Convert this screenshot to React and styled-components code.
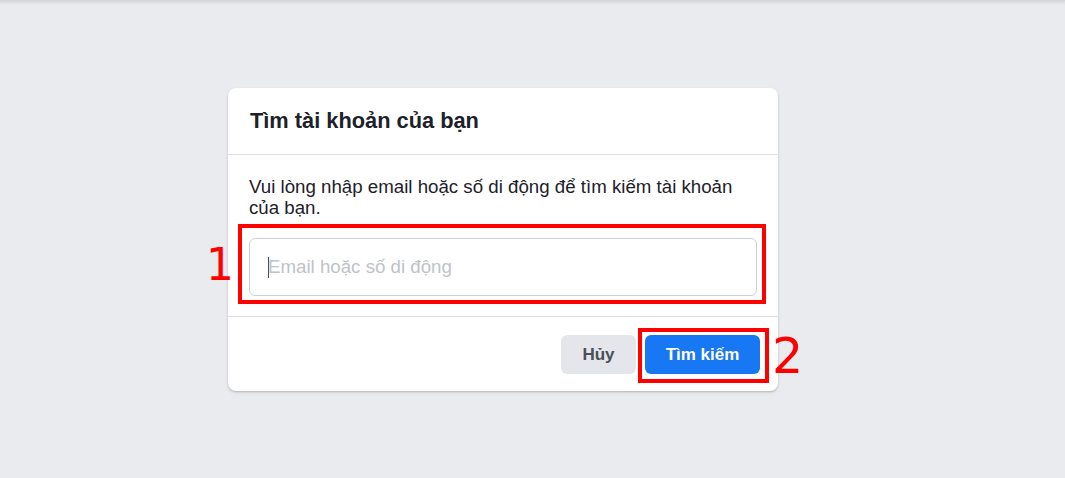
import React from 'react'
import styled, { createGlobalStyle } from 'styled-components'

const Global = createGlobalStyle`
  html, body {
    margin: 0;
    padding: 0;
    background: #e9ebee;
    font-family: "Liberation Sans", Arial, Helvetica, sans-serif;
  }
`

const Page = styled.div`
  width: 1065px;
  height: 478px;
  box-sizing: border-box;
  background: linear-gradient(to bottom, #d2d4d8 0px, #e4e6ea 4px, #e9ebee 6px);
  padding: 88px 0 0 228px;
`

const Card = styled.div`
  width: 550px;
  background: #fff;
  border-radius: 8px;
  box-shadow: 0 1px 2px rgba(0, 0, 0, 0.18), 0 2px 4px rgba(0, 0, 0, 0.06);
`

const Header = styled.div`
  height: 66px;
  padding: 0 22px;
  display: flex;
  align-items: center;
  border-bottom: 1px solid #dddfe2;
`

const Title = styled.h2`
  margin: 0;
  font-size: 21.8px;
  font-weight: bold;
  color: #1d2129;
`

const Body = styled.div`
  padding: 21px 21px 20px;
  border-bottom: 1px solid #dddfe2;
`

const Text = styled.p`
  margin: 0 0 20px;
  font-size: 18.7px;
  line-height: 21px;
  color: #1d2129;
`

const Mark = styled.div`
  position: relative;
`

const Highlight = styled.div`
  position: absolute;
  top: ${p => p.$top}px;
  left: ${p => p.$left}px;
  right: ${p => p.$right}px;
  bottom: ${p => p.$bottom}px;
  border: 4px solid #ff0000;
  pointer-events: none;
`

const Label = styled.span`
  position: absolute;
  top: ${p => p.$top}px;
  left: ${p => p.$left}px;
  font-size: ${p => p.$size}px;
  line-height: 1;
  color: #ff0000;
  font-family: "DejaVu Sans", sans-serif;
  font-weight: 400;
`

const Input = styled.input`
  display: block;
  width: 100%;
  height: 58px;
  box-sizing: border-box;
  border: 1px solid #ccd0d5;
  border-radius: 6px;
  padding: 0 18px;
  font-family: inherit;
  font-size: 18.7px;
  color: #1d2129;
  outline: none;
  &::placeholder {
    color: #bec3c9;
  }
`

const Caret = styled.span`
  position: absolute;
  left: 19px;
  top: 19px;
  width: 1px;
  height: 21px;
  background: #4b4f56;
`

const Footer = styled.div`
  display: flex;
  justify-content: flex-end;
  gap: 9px;
  padding: 18px 18px 17px;
`

const Button = styled.button`
  height: 39px;
  width: ${p => p.$w}px;
  border: none;
  border-radius: 6px;
  font-family: inherit;
  font-size: 17px;
  font-weight: bold;
  background: ${p => (p.$primary ? '#1877f2' : '#e4e6eb')};
  color: ${p => (p.$primary ? '#fff' : '#4b4f56')};
  cursor: pointer;
`

export default function App() {
  return (
    <>
      <Global />
      <Page>
        <Card>
          <Header>
            <Title>Tìm tài khoản của bạn</Title>
          </Header>
          <Body>
            <Text>Vui lòng nhập email hoặc số di động để tìm kiếm tài khoản của bạn.</Text>
            <Mark>
              <Input placeholder="Email hoặc số di động" />
              <Caret />
              <Highlight $top={-14} $left={-11} $right={-9} $bottom={-8} />
              <Label $top={5} $left={-43} $size={44}>1</Label>
            </Mark>
          </Body>
          <Footer>
            <Button $w={75}>Hủy</Button>
            <Mark>
              <Button $primary $w={115}>Tìm kiếm</Button>
              <Highlight $top={-7} $left={-7} $right={-9} $bottom={-9} />
              <Label $top={-3} $left={127} $size={49}>2</Label>
            </Mark>
          </Footer>
        </Card>
      </Page>
    </>
  )
}
